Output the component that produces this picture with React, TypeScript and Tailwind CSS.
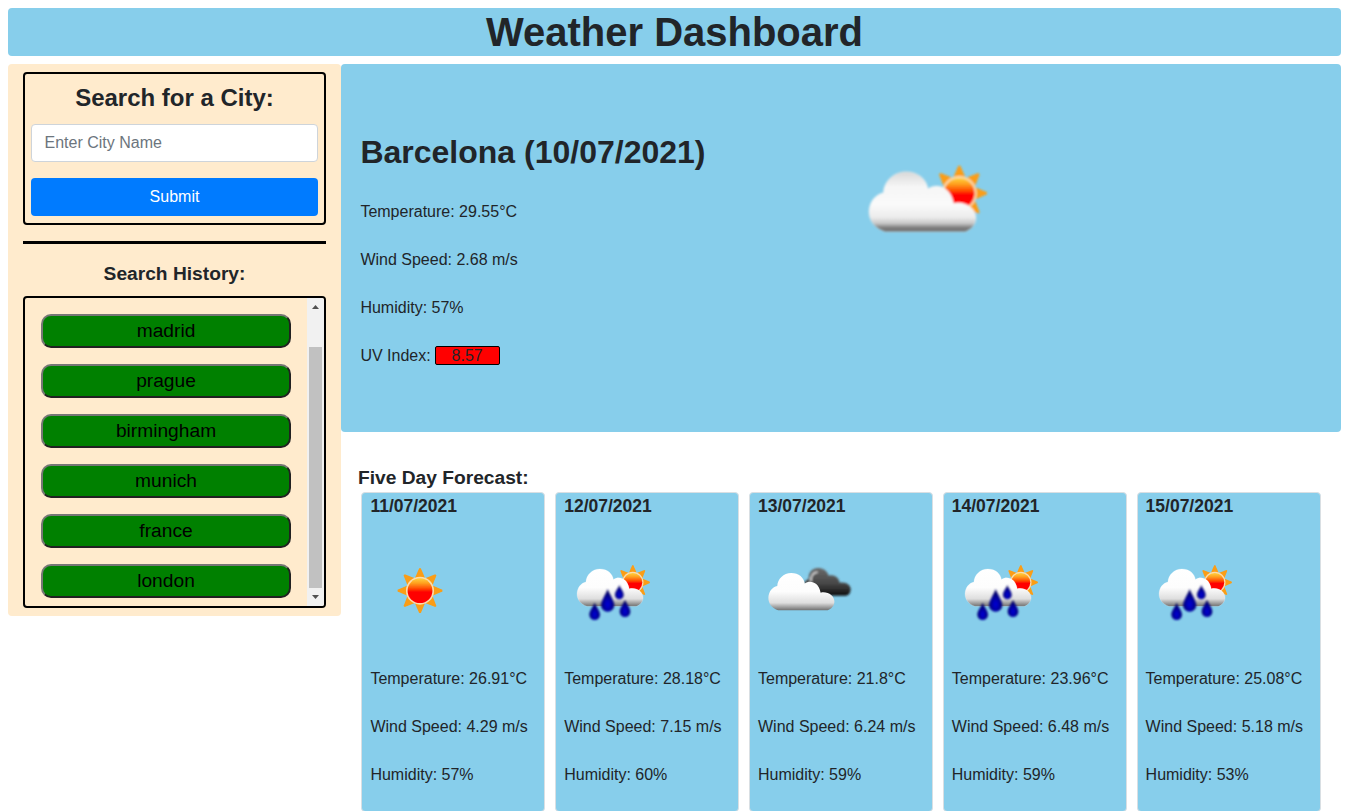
import React from 'react';

const CLOUD =
  'M105 245 C75 235 56 212 57 183 C59 153 77 133 100 128 C102 94 130 65 168 65 C205 65 230 88 234 116 C258 98 302 108 311 160 C345 152 378 175 378 203 C378 224 362 240 345 245 Z';

function Defs({ id }: { id: string }) {
  return (
    <defs>
      <linearGradient id={`${id}-cloud`} x1="0" y1="65" x2="0" y2="245" gradientUnits="userSpaceOnUse">
        <stop offset="0" stopColor="#d8d8d8" />
        <stop offset="0.25" stopColor="#f6f6f6" />
        <stop offset="0.55" stopColor="#fafafa" />
        <stop offset="0.76" stopColor="#ececec" />
        <stop offset="0.86" stopColor="#c8c8c8" />
        <stop offset="0.93" stopColor="#808080" />
        <stop offset="1" stopColor="#6a6a6a" />
      </linearGradient>
      <linearGradient id={`${id}-front`} x1="0" y1="65" x2="0" y2="245" gradientUnits="userSpaceOnUse">
        <stop offset="0" stopColor="#ffffff" />
        <stop offset="0.5" stopColor="#fdfdfd" />
        <stop offset="0.8" stopColor="#dedede" />
        <stop offset="1" stopColor="#707070" />
      </linearGradient>
      <linearGradient id={`${id}-sun`} x1="0" y1="0" x2="0" y2="1">
        <stop offset="0" stopColor="#ffd23c" />
        <stop offset="0.2" stopColor="#ffa020" />
        <stop offset="0.42" stopColor="#ff4a00" />
        <stop offset="0.55" stopColor="#ff0000" />
      </linearGradient>
      <linearGradient id={`${id}-dark`} x1="0" y1="0" x2="0" y2="1">
        <stop offset="0" stopColor="#6a6a6a" />
        <stop offset="0.55" stopColor="#484848" />
        <stop offset="1" stopColor="#101010" />
      </linearGradient>
      <radialGradient id={`${id}-drop`} cx="0.5" cy="0.68" r="0.5">
        <stop offset="0" stopColor="#0808d8" />
        <stop offset="0.6" stopColor="#0000a0" />
        <stop offset="1" stopColor="#000068" />
      </radialGradient>
      <filter id={`${id}-soft`} x="-5%" y="-5%" width="110%" height="110%">
        <feGaussianBlur stdDeviation="2.8" />
      </filter>
    </defs>
  );
}

function Sun({ id, rays }: { id: string; rays: number[] }) {
  return (
    <g>
      {rays.map((a) => (
        <polygon key={a} points="-19,-46 -3,-83 3,-83 19,-46" fill="#fb9d14" transform={`rotate(${a})`} />
      ))}
      <circle r="52" fill="#fbdcae" />
      <circle r="46" fill={`url(#${id}-sun)`} />
    </g>
  );
}

function SunBehindCloud({ id, front }: { id: string; front?: boolean }) {
  return (
    <g filter={`url(#${id}-soft)`}>
      <g transform="translate(328 130)">
        <Sun id={id} rays={[-45, 0, 45, 90, 135]} />
      </g>
      <path
        d={CLOUD}
        fill={`url(#${id}-${front ? 'front' : 'cloud'})`}
        stroke={front ? '#ffffff' : '#f4f4f4'}
        strokeOpacity="0.35"
        strokeWidth="3"
      />
    </g>
  );
}

function Drop({ id, x, top, bottom, r }: { id: string; x: number; top: number; bottom: number; r: number }) {
  const c = bottom - r;
  return (
    <path
      d={`M${x} ${top} C${x + 4} ${top + 12} ${x + r} ${c - 12} ${x + r} ${c} A${r} ${r} 0 0 1 ${x - r} ${c} C${x - r} ${c - 12} ${x - 4} ${top + 12} ${x} ${top} Z`}
      fill={`url(#${id}-drop)`}
    />
  );
}

function RainIcon({ id }: { id: string }) {
  return (
    <svg viewBox="0 0 300 225" className="ml-px h-[75px] w-[100px]">
      <Defs id={id} />
      <g transform="translate(1 1.6) scale(0.617 0.622)">
        <SunBehindCloud id={id} front />
      </g>
      <g filter={`url(#${id}-soft)`}>
        <Drop id={id} x={128} top={102} bottom={170} r={20} />
        <Drop id={id} x={163} top={90} bottom={133} r={13} />
        <Drop id={id} x={89} top={143} bottom={195} r={16} />
        <Drop id={id} x={180} top={134} bottom={186} r={16} />
      </g>
    </svg>
  );
}

function SunIcon({ id }: { id: string }) {
  return (
    <svg viewBox="0 0 180 180" className="ml-5 mt-[5px] h-[60px] w-[60px]">
      <Defs id={id} />
      <g transform="translate(90 92) scale(0.81)" filter={`url(#${id}-soft)`}>
        <Sun id={id} rays={[0, 45, 90, 135, 180, 225, 270, 315]} />
      </g>
    </svg>
  );
}

function CloudsIcon({ id }: { id: string }) {
  return (
    <svg viewBox="0 0 330 210" className="-ml-[3px] h-[70px] w-[110px]">
      <Defs id={id} />
      <g filter={`url(#${id}-soft)`}>
        <path
          d="M150 122 C138 95 146 76 161 72 C160 50 174 38 191 39 C207 40 217 49 221 62 C238 58 251 68 254 83 C275 80 288 91 287 104 C286 115 280 122 270 122 Z"
          fill={`url(#${id}-dark)`}
        />
        <path d="M168 80 C166 62 174 53 188 51" fill="none" stroke="#d8d8d8" strokeWidth="5" />
      </g>
      <g transform="translate(5 13.6) scale(0.617 0.622)" filter={`url(#${id}-soft)`}>
        <path d={CLOUD} fill={`url(#${id}-front)`} />
      </g>
    </svg>
  );
}

const cities = ['madrid', 'prague', 'birmingham', 'munich', 'france', 'london'];

const forecast = [
  { date: '11/07/2021', icon: 'sun', temp: '26.91', wind: '4.29', humidity: '57' },
  { date: '12/07/2021', icon: 'rain', temp: '28.18', wind: '7.15', humidity: '60' },
  { date: '13/07/2021', icon: 'clouds', temp: '21.8', wind: '6.24', humidity: '59' },
  { date: '14/07/2021', icon: 'rain', temp: '23.96', wind: '6.48', humidity: '59' },
  { date: '15/07/2021', icon: 'rain', temp: '25.08', wind: '5.18', humidity: '53' },
];

function HistoryScrollbar() {
  return (
    <div className="flex w-[17px] shrink-0 flex-col items-center bg-[#f1f1f1]">
      <svg viewBox="0 0 17 17" className="h-[17px] w-[17px]">
        <path d="M5 11 L8.5 7 L12 11 Z" fill="#505050" />
      </svg>
      <div className="mt-8 h-[241px] w-[13px] bg-[#c1c1c1]" />
      <svg viewBox="0 0 17 17" className="h-[17px] w-[17px]">
        <path d="M5 7 L8.5 11 L12 7 Z" fill="#505050" />
      </svg>
    </div>
  );
}

function Sidebar() {
  return (
    <aside className="h-[552px] w-[333px] shrink-0 rounded bg-[#ffebcd] px-[15px] pt-2">
      <form className="h-[153px] rounded border-2 border-black px-1.5 pt-[9px]">
        <h2 className="text-center text-2xl font-bold leading-[29px]">Search for a City:</h2>
        <input
          type="text"
          placeholder="Enter City Name"
          className="mt-3 block h-[38px] w-full rounded border border-[#ced4da] bg-white pl-[12.5px] pr-3 text-base placeholder:text-[#6c757d]"
        />
        <button type="button" className="mt-4 block h-[38px] w-full rounded bg-[#007bff] text-base text-white">
          Submit
        </button>
      </form>
      <div className="mt-4 h-[3px] bg-black" />
      <h3 className="mt-[18px] text-center text-[19.2px] font-bold leading-[23px]">Search History:</h3>
      <div className="mt-[11px] flex h-[312px] overflow-hidden rounded border-2 border-black">
        <div className="flex flex-1 flex-col gap-4 px-4 pt-4">
          {cities.map((city) => (
            <button
              key={city}
              type="button"
              className="h-[34px] w-full shrink-0 rounded-[10px] border-2 border-b-[#212121] border-l-[#767676] border-r-[#212121] border-t-[#767676] bg-[#008000] text-[19.2px] leading-[28px] text-black"
            >
              {city}
            </button>
          ))}
        </div>
        <HistoryScrollbar />
      </div>
    </aside>
  );
}

function CurrentWeather() {
  return (
    <section className="flex h-[368px] rounded bg-[#87ceeb] pl-[19.4px]">
      <div className="w-[489.6px] pt-[69px]">
        <h2 className="text-[32px] font-bold leading-[38px]">Barcelona (10/07/2021)</h2>
        <div className="mt-[29px] flex flex-col gap-6 leading-6">
          <p>Temperature: 29.55°C</p>
          <p>Wind Speed: 2.68 m/s</p>
          <p>Humidity: 57%</p>
          <p className="flex h-6 items-start">
            UV Index:
            <span className="ml-1 mt-0.5 h-[19px] w-[65px] rounded-[2px] border border-black bg-[#ff0000] text-center leading-[18px]">
              8.57
            </span>
          </p>
        </div>
      </div>
      <svg viewBox="0 0 480 300" className="mt-[86px] h-[100px] w-[160px]">
        <Defs id="now" />
        <SunBehindCloud id="now" />
      </svg>
    </section>
  );
}

function Forecast() {
  return (
    <section>
      <h3 className="ml-[17px] mt-[34px] text-[19.2px] font-bold leading-[23px]">Five Day Forecast:</h3>
      <div className="ml-[20.4px] mt-[3px] flex gap-[9.8px]">
        {forecast.map((day, i) => (
          <article
            key={day.date}
            className="h-80 w-[184px] shrink-0 rounded border border-[#d9dfe3] bg-[#87ceeb] pt-[3px]"
          >
            <h4 className="ml-2 text-[17.5px] font-bold leading-[21px]">{day.date}</h4>
            <div className="ml-2 flex h-[150px] items-start pt-[38px]">
              {day.icon === 'sun' && <SunIcon id={`d${i}`} />}
              {day.icon === 'rain' && <RainIcon id={`d${i}`} />}
              {day.icon === 'clouds' && <CloudsIcon id={`d${i}`} />}
            </div>
            <div className="ml-2 flex flex-col gap-6 leading-6">
              <p>Temperature: {day.temp}°C</p>
              <p>Wind Speed: {day.wind} m/s</p>
              <p>Humidity: {day.humidity}%</p>
            </div>
          </article>
        ))}
      </div>
    </section>
  );
}

export default function App() {
  return (
    <div className="h-[811px] overflow-hidden bg-white px-2 pt-2 font-['Liberation_Sans',Arial,sans-serif] text-base text-[#212529]">
      <header className="h-12 rounded bg-[#87ceeb]">
        <h1 className="text-center text-[40px] font-bold leading-[48px]">Weather Dashboard</h1>
      </header>
      <div className="mt-2 flex">
        <Sidebar />
        <main className="min-w-0 flex-1">
          <CurrentWeather />
          <Forecast />
        </main>
      </div>
    </div>
  );
}
